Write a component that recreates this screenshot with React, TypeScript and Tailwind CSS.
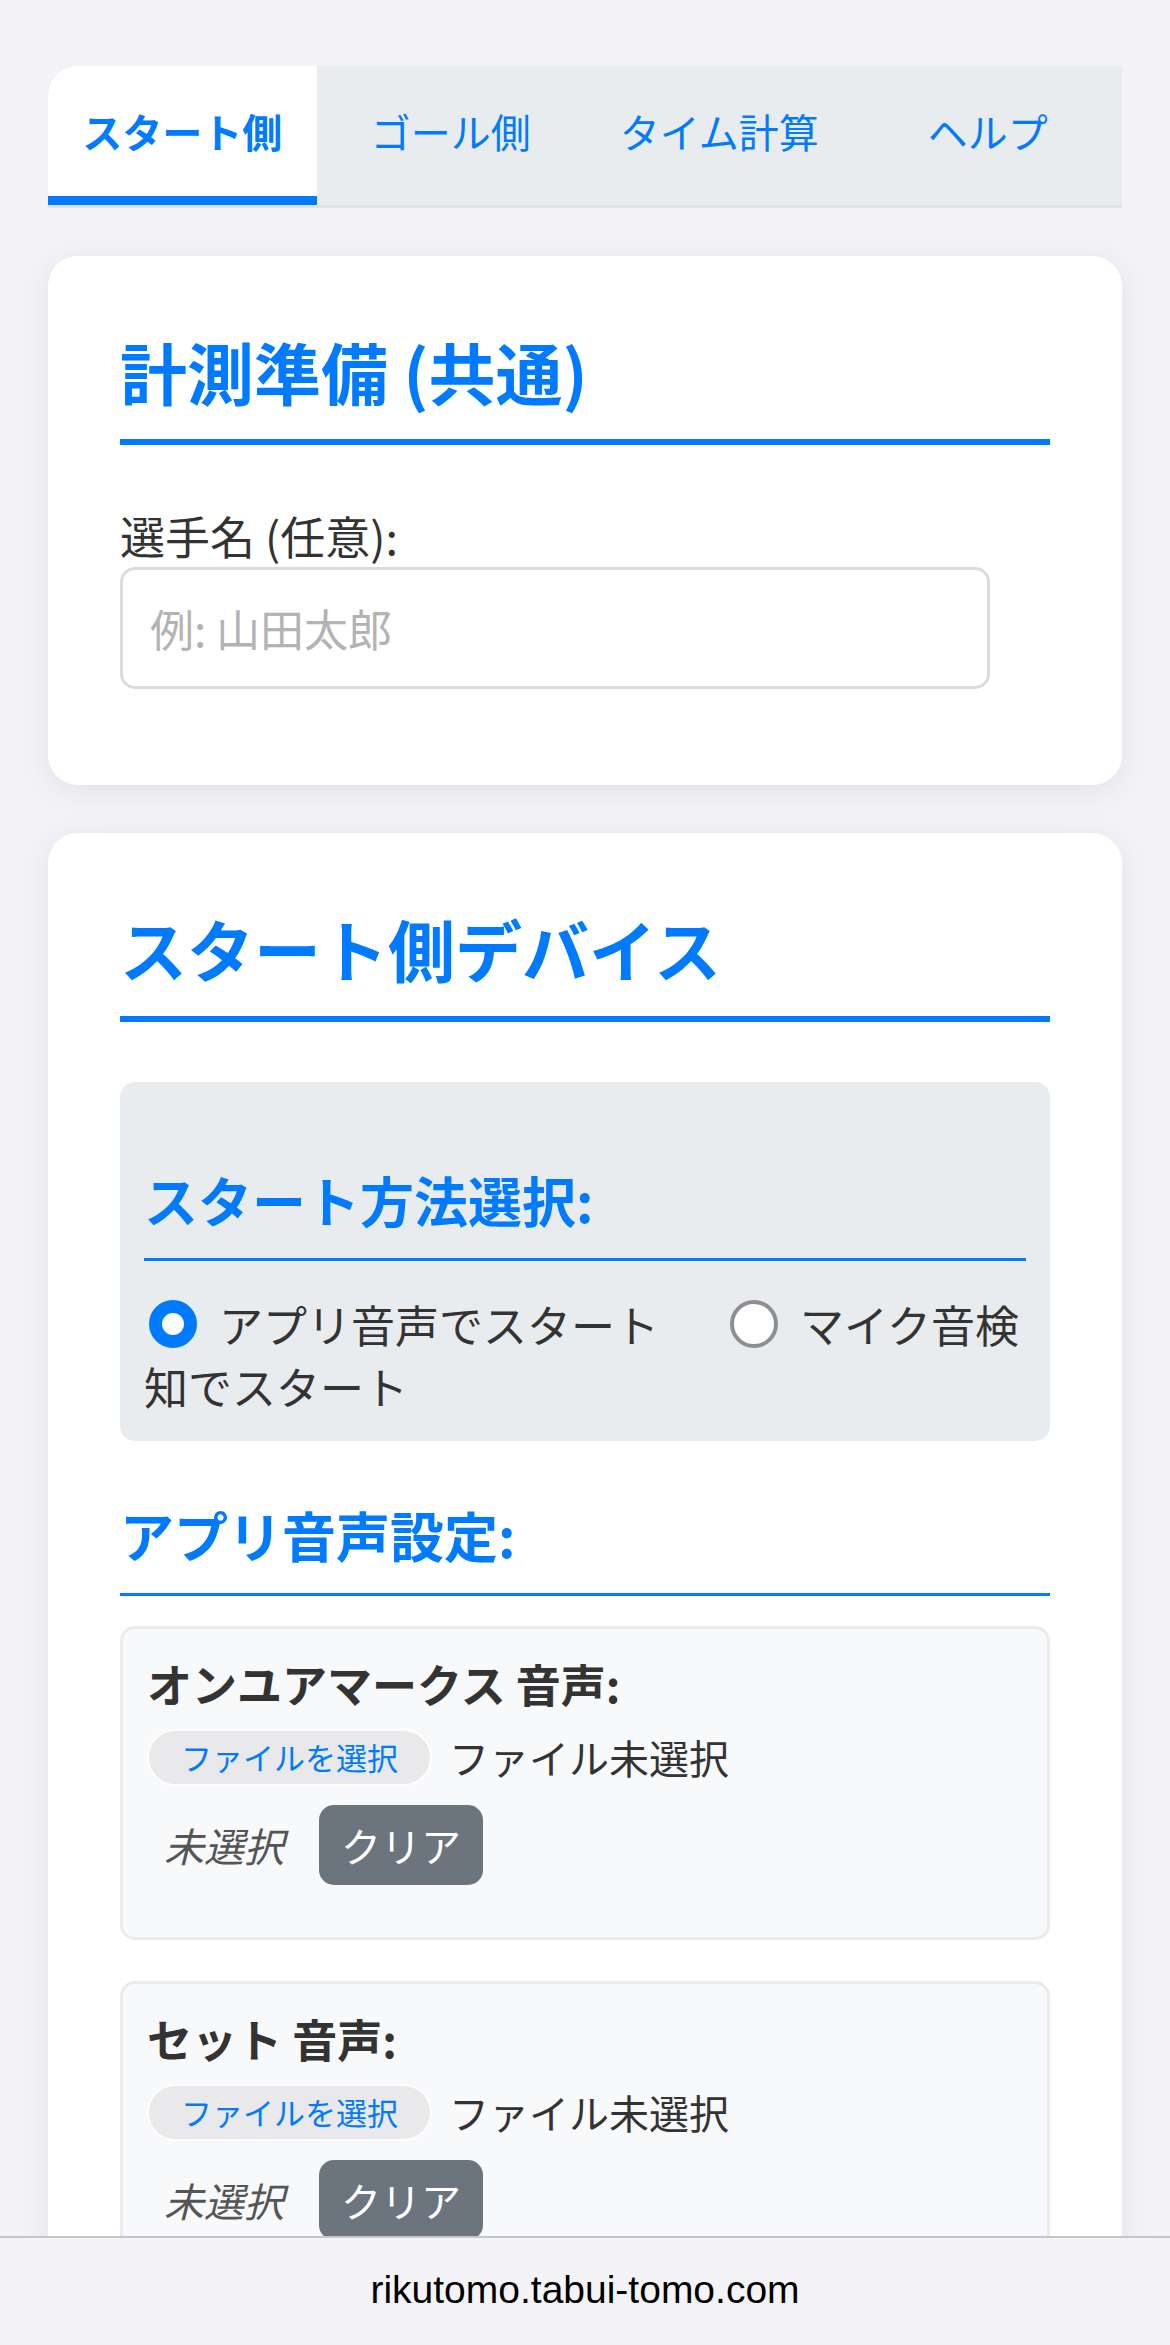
const tabs = [
  { label: 'スタート側', active: true },
  { label: 'ゴール側', active: false },
  { label: 'タイム計算', active: false },
  { label: 'ヘルプ', active: false },
]

const sounds = ['オンユアマークス 音声:', 'セット 音声:']

function Radio({ checked }: { checked: boolean }) {
  return checked ? (
    <span className="ml-[5px] mr-[22px] inline-block h-[48px] w-[48px] rounded-full border-[13px] border-[#007bff] bg-white align-[-5px]" />
  ) : (
    <span className="ml-[5px] mr-[22px] inline-block h-[48px] w-[48px] rounded-full border-[4px] border-[#8e8e93] bg-white align-[-5px]" />
  )
}

function SoundBox({ title, first }: { title: string; first: boolean }) {
  return (
    <div
      className={
        first
          ? 'rounded-[15px] border-[3px] border-[#e9ecef] bg-[#f8f9fa] p-[24px]'
          : 'mt-[41px] rounded-[15px] border-[3px] border-[#e9ecef] bg-[#f8f9fa] p-[24px]'
      }
    >
      <h4 className="text-[45px] font-bold leading-[62px] text-[#333]">{title}</h4>
      <div className="mt-[12px] flex items-center">
        <button className="flex h-[57px] w-[285px] items-center justify-center rounded-full border-[2px] border-[#fdfdfd] bg-[#e9e9eb] text-[31px] text-[#007aff]">
          ファイルを選択
        </button>
        <span className="ml-[17px] text-[40px] text-[#333]">ファイル未選択</span>
      </div>
      <div className="mb-[28px] mt-[18px] flex items-center">
        <span className="ml-[17px] text-[40px] italic text-[#555]">未選択</span>
        <button className="ml-[35px] flex h-[80px] items-center rounded-[15px] bg-[#6c757d] px-[22px] text-[40px] text-white">
          クリア
        </button>
      </div>
    </div>
  )
}

export default function App() {
  return (
    <div className="flex h-[2345px] flex-col overflow-hidden bg-[#f2f2f7] font-['Noto_Sans_CJK_JP',sans-serif] text-[#333]">
      <div className="min-h-0 flex-1 overflow-hidden px-[48px] pt-[66px]">
        {/* Tabs */}
        <div className="flex overflow-hidden rounded-tl-[30px] border-b-[3px] border-[#dee2e6] bg-[#e9ecef]">
          {tabs.map((tab) => (
            <div
              key={tab.label}
              className={
                tab.active
                  ? 'flex h-[139px] flex-1 items-center justify-center border-b-[9px] border-[#007bff] bg-white text-[40px] font-bold text-[#007bff]'
                  : 'flex h-[139px] flex-1 items-center justify-center border-b-[9px] border-transparent text-[40px] text-[#007bff]'
              }
            >
              {tab.label}
            </div>
          ))}
        </div>

        {/* Common setup */}
        <section className="mt-[48px] rounded-[30px] bg-white px-[72px] pb-[96px] pt-[72px] shadow-[0_6px_30px_rgba(0,0,0,0.07)]">
          <h2 className="border-b-[6px] border-[#007bff] pb-[25px] text-[67px] font-bold leading-[86px] text-[#007bff]">
            計測準備 (共通)
          </h2>
          <label className="mt-[60px] block text-[45px] leading-[62px]">選手名 (任意):</label>
          <input
            placeholder="例: 山田太郎"
            className="block h-[122px] w-[870px] rounded-[15px] border-[3px] border-[#dcdcdc] bg-white px-[27px] text-[44px] outline-none placeholder:text-[#b3b3b3]"
          />
        </section>

        {/* Start device */}
        <section className="mt-[48px] rounded-[30px] bg-white px-[72px] pb-[96px] pt-[72px] shadow-[0_6px_30px_rgba(0,0,0,0.07)]">
          <h2 className="border-b-[6px] border-[#007bff] pb-[25px] text-[67px] font-bold leading-[86px] text-[#007bff]">
            スタート側デバイス
          </h2>

          <div className="mt-[60px] rounded-[15px] bg-[#e9ecef] p-[24px]">
            <h3 className="mt-[62px] border-b-[3px] border-[#007bff] pb-[26px] text-[54px] font-bold leading-[64px] text-[#007bff]">
              スタート方法選択:
            </h3>
            <p className="mt-[32px] text-[44px] leading-[62px]">
              <label className="mr-[66px]">
                <Radio checked />
                アプリ音声でスタート
              </label>
              <label>
                <Radio checked={false} />
                マイク音検知でスタート
              </label>
            </p>
          </div>

          <h3 className="mb-[30px] mt-[62px] border-b-[3px] border-[#007bff] pb-[26px] text-[54px] font-bold leading-[64px] text-[#007bff]">
            アプリ音声設定:
          </h3>

          {sounds.map((s, i) => (
            <SoundBox key={s} title={s} first={i === 0} />
          ))}
        </section>
      </div>

      {/* Browser address bar */}
      <div className="flex h-[109px] shrink-0 justify-center border-t-[2px] border-[#c6c6c8] bg-[#f3f3f8] pt-[29px] font-['Liberation_Sans',sans-serif] text-[39px] leading-[45px] text-black">
        rikutomo.tabui-tomo.com
      </div>
    </div>
  )
}
